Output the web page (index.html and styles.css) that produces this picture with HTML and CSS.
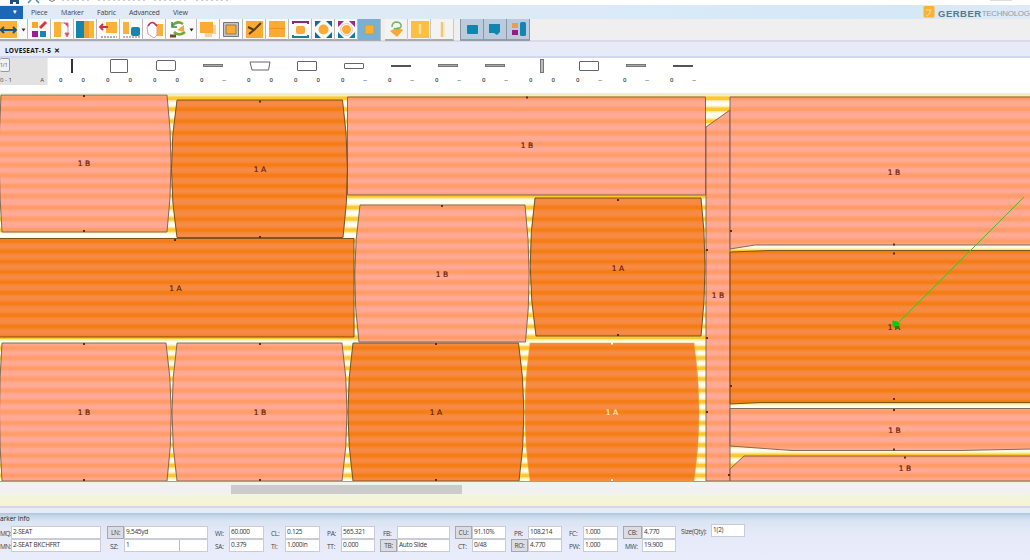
FILE: index.html
```
<!DOCTYPE html>
<html lang="en">
<head>
<meta charset="utf-8">
<title>Marker Making</title>
<link rel="stylesheet" href="styles.css">
</head>
<body>
<div class="app">
  <header class="titlebar">
    <svg width="1030" height="5" viewBox="0 0 1030 5"><path d="M10 0h9v4h-3v-2h-3v2h-3z" fill="#1d4f7d"/><path d="M28 3l3-3M36 0l3 3" stroke="#4d94b8" stroke-width="1.5"/><path d="M49 0q3 3 6 0" stroke="#777" fill="none"/><path d="M62 0h28M98 0h50M154 0h32M196 0h32" stroke="#999" stroke-dasharray="2 3"/><path d="M990 0h22" stroke="#bbb"/></svg>
  </header>
  <nav class="menubar">
    <span class="filebtn">▾</span>
    <span class="menu m1">Piece</span><span class="menu m2">Marker</span><span class="menu m3">Fabric</span><span class="menu m4">Advanced</span><span class="menu m5">View</span>
    <div class="brand">
      <svg width="12" height="12" viewBox="0 0 12 12"><rect x=".5" width="11" height="11.5" rx="1.5" fill="#f9b233"/><path d="M3 10q4-1 5-7M3 4h4" stroke="#ffd07a" stroke-width="1.4" fill="none"/></svg>
      <b>GERBER</b><span>TECHNOLOGY</span>
    </div>
  </nav>
  <div class="toolbar">
    <div class="group">
      <span class="tool first"><svg width="27" height="21" viewBox="0 0 27 21"><path d="M0 2h17v17H0z" fill="#fbb03a"/><path d="M0 11h16M4 8l-3 3 3 3M13 8l3 3-3 3" stroke="#17597d" stroke-width="2" fill="none"/><path d="M21.500 9.500h4l-2 3z" fill="#333"/></svg></span>
      <span class="tool"><svg viewBox="0 0 23 21"><path d="M4 3h6v6H4z" fill="#f9a72b"/><path d="M4 12h6v6H4z" fill="#a01b8c"/><path d="M12 12h6v6h-6z" fill="#1687b5"/><path d="M12 9l6-6" stroke="#df3340" stroke-width="3"/></svg></span>
      <span class="tool"><svg viewBox="0 0 23 21"><path d="M3 3h7v15H3z" fill="#fbb03a"/><path d="M10 4q7-1 7 5v6" stroke="#aaa" fill="none"/><path d="M13 4h4v4M14 14l2 4 2-4z" stroke="#e56d78" fill="#d93a4d"/></svg></span>
      <span class="tool"><svg viewBox="0 0 23 21"><path d="M2 2h8v17H2z" fill="#1585ae"/><path d="M10 2h5v17h-5z" fill="#e9a02d"/><path d="M15 2h5v17h-5z" fill="#ffb52d"/></svg></span>
      <span class="tool"><svg viewBox="0 0 23 21"><path d="M9 3h11v11H9z" fill="#fbb03a"/><path d="M3 8h8M6 5L3 8l3 3" stroke="#cf3041" stroke-width="1.800" fill="none"/><path d="M4 18h16" stroke="#666" stroke-dasharray="2 1"/></svg></span>
      <span class="tool"><svg viewBox="0 0 23 21"><path d="M3 3h6v12H3z" fill="#fbb03a"/><rect x="11" y="8" width="9" height="9" rx="2" fill="#1585ae"/><path d="M3 18h17" stroke="#777" stroke-dasharray="2 1"/></svg></span>
      <span class="tool"><svg viewBox="0 0 23 21"><path d="M12 5h8v12h-8z" fill="#fbb03a"/><path d="M4 8l5-5 5 5v8l-3 3-6-4z" fill="#fff" stroke="#d9a0a0"/><path d="M5 7q4-7 9 0" stroke="#c83256" stroke-width="1.600" fill="none"/></svg></span>
      <span class="tool wide"><svg width="30" height="21" viewBox="0 0 30 21"><path d="M6 7q5-6 11-2M8 13q5 5 11 0" stroke="#6eaa38" stroke-width="2.500" fill="none"/><path d="M11 11l7-5v7z" fill="#f6a63a"/><path d="M4 17h6" stroke="#774a2a" stroke-width="3"/><path d="M6 3v5h5" stroke="#3a8b57" stroke-width="1.500" fill="none"/><path d="M23.500 9.500h4l-2 3z" fill="#222"/></svg></span>
      <span class="tool"><svg viewBox="0 0 23 21"><path d="M7 6h12v9h-4v3H8z" fill="#f9d29b"/><path d="M3 3h13v11H3z" fill="#fbab33"/></svg></span>
      <span class="tool"><svg viewBox="0 0 23 21"><path d="M3.500 3.500h15v14h-15z" fill="#bfc4ce" stroke="#727784"/><path d="M6 6h10v9H6z" fill="#fbab33" stroke="#9c7b45"/></svg></span>
      <span class="tool"><svg viewBox="0 0 23 21"><path d="M3 2h17v17H3z" fill="#fbab33"/><path d="M5 8l6 3 7-7M6 15l5-4" stroke="#5b3d16" stroke-width="2" fill="none"/></svg></span>
      <span class="tool"><svg viewBox="0 0 23 21"><path d="M3 2h16v7H3zM3 10h16v8H3z" fill="#fbab33"/><path d="M3 9.500h16" stroke="#f58c22"/></svg></span>
      <span class="tool"><svg viewBox="0 0 23 21"><rect x="7" y="7" width="9" height="8" rx="2" fill="#fbab33"/><path d="M4 5V3h15v2" stroke="#8c2683" stroke-width="2" fill="none"/><path d="M4 16v2h15v-2" stroke="#168097" stroke-width="2" fill="none"/></svg></span>
      <span class="tool"><svg viewBox="0 0 23 21"><circle cx="11.500" cy="10.500" r="5" fill="#fbab33"/><path d="M3 8V2h6zM14 2h6v6zM3 13v6h6zM20 13v6h-6z" fill="#146b98"/></svg></span>
      <span class="tool"><svg viewBox="0 0 23 21"><circle cx="11.500" cy="10.500" r="4.500" fill="#fbab33"/><path d="M3 8V2h6zM14 2h6v6z" fill="#a02a83"/><path d="M3 13v6h6zM20 13v6h-6z" fill="#147b98"/><circle cx="11.500" cy="10.500" r="6" fill="none" stroke="#ecc7bc"/></svg></span>
      <span class="tool sel"><svg viewBox="0 0 23 21"><path d="M2 2h18v17H2z" fill="#78b1d8"/><path d="M7 6h9v9H7z" fill="#f9b02e" stroke="#a9a270"/></svg></span>
    </div>
    <div class="group second">
      <span class="tool"><svg viewBox="0 0 23 21"><path d="M5 12l8-4 5 3-6 7z" fill="#f9a83a"/><path d="M7 8q0-5 5-5 5 1 4 5-4 3-7 1" stroke="#75b06d" stroke-width="1.500" fill="none"/></svg></span>
      <span class="tool"><svg viewBox="0 0 23 21"><path d="M3 2h18v17H3z" fill="#ffbd42"/><path d="M12 5v10" stroke="#ffe5a1" stroke-width="2.500"/></svg></span>
      <span class="tool"><svg viewBox="0 0 23 21"><path d="M11 3v15" stroke="#efc873" stroke-width="2.500"/><path d="M13 3v15" stroke="#eee1b8"/></svg></span>
    </div>
    <div class="group third">
      <span class="tool"><svg viewBox="0 0 23 21"><rect x="6" y="6" width="11" height="9" rx="1" fill="#0f86ad"/></svg></span>
      <span class="tool"><svg viewBox="0 0 23 21"><path d="M5 5h11v8l-3 3-3-2H5z" fill="#0f86ad"/></svg></span>
      <span class="tool"><svg viewBox="0 0 23 21"><path d="M5 4h6v5H5z" fill="#f39a47"/><path d="M5 11h6v5H5z" fill="#9a1a82"/><rect x="13" y="3" width="6" height="14" rx="1.500" fill="#1286ad"/></svg></span>
    </div>
  </div>
  <div class="tabs"><span>LOVESEAT-1-5</span><b>✕</b></div>
  <div class="tray">
    <div class="corner"><i>1/1</i><p><span>0 - 1</span><span>A</span></p></div>
    <div class="cell"><div><i class="vbar"></i></div><p><span>0</span><span>0</span></p></div>
    <div class="cell"><div><i class="box tall"></i></div><p><span>0</span><span>0</span></p></div>
    <div class="cell"><div><i class="box mid"></i></div><p><span>0</span><span>0</span></p></div>
    <div class="cell"><div><i class="flat"></i></div><p><span>0</span><span>--</span></p></div>
    <div class="cell"><div><svg width="22" height="10" viewBox="0 0 22 10"><path d="M1 1h20l-1.500 8h-16.500z" fill="#fff" stroke="#666"/></svg></div><p><span>0</span><span>0</span></p></div>
    <div class="cell"><div><i class="box"></i></div><p><span>0</span><span>0</span></p></div>
    <div class="cell"><div><i class="box low"></i></div><p><span>0</span><span>--</span></p></div>
    <div class="cell"><div><i class="line"></i></div><p><span>0</span><span>--</span></p></div>
    <div class="cell"><div><i class="flat"></i></div><p><span>0</span><span>--</span></p></div>
    <div class="cell"><div><i class="flat"></i></div><p><span>0</span><span>--</span></p></div>
    <div class="cell"><div><i class="vbox"></i></div><p><span>0</span><span>0</span></p></div>
    <div class="cell"><div><i class="box"></i></div><p><span>0</span><span>--</span></p></div>
    <div class="cell"><div><i class="flat"></i></div><p><span>0</span><span>--</span></p></div>
    <div class="cell"><div><i class="line"></i></div><p><span>0</span><span>--</span></p></div>
  </div>
  <svg class="marker" width="1030" height="390" viewBox="0 93 1030 390">
    <defs>
      <path id="stripes" d="M0 98.3H1030M0 109.3H1030M0 121.300H1030M0 133H1030M0 144H1030M0 155H1030M0 165H1030M0 175.500H1030M0 186H1030M0 196H1030M0 207.500H1030M0 219H1030M0 230H1030M0 241H1030M0 251.500H1030M0 261.700H1030M0 272H1030M0 282.300H1030M0 292.700H1030M0 303.500H1030M0 315.300H1030M0 326.500H1030M0 337.300H1030M0 348H1030M0 358H1030M0 368.300H1030M0 379H1030M0 390.500H1030M0 401.700H1030M0 412H1030M0 423H1030M0 434H1030M0 445H1030M0 455.500H1030M0 465.500H1030M0 475.500H1030"/>
    </defs>
    <rect y="93" width="1030" height="390" fill="#fffef2"/>
    <use href="#stripes" class="stripe-halo"/>
    <use href="#stripes" class="stripe-edge"/>
    <use href="#stripes" class="stripe-core"/>
    <g class="light">
      <path d="M1 95H167Q175 163 167 232H2Q-3 163 1 95Z"/>
      <path d="M347.500 97H705.500V195H347.500Z"/>
      <path d="M360 205H525Q533 274 525.500 342H359Q350 274 360 205Z"/>
      <path d="M706 127L730 110V481H706Z"/>
      <path d="M730 97H1032V245H755L730 249Z"/>
      <path d="M730 408.500H1032V449L960 450.500H792L730 446Z"/>
      <path d="M730 469L744 456H1032V481H730Z"/>
      <path d="M2 343H166Q176 412 167 481H2Q-3 412 2 343Z"/>
      <path d="M177 343H342Q352 412 342 481H177Q167 412 177 343Z"/>
    </g>
    <g class="dark">
      <path d="M177 100H342.500Q352 168 343 237.500H177Q166 168 177 100Z"/>
      <path d="M-2 238.500H354V337H-2Z"/>
      <path d="M535 198H701Q709 266 701 336H536Q525 266 535 198Z"/>
      <path d="M730 252L770 250.500H1032V402.500H760L730 404Z"/>
      <path d="M353 343H518.500Q529 412 519 481H353Q343 412 353 343Z"/>
      <path class="active" d="M530 343H694Q704 412 694 481H530Q520 412 530 343Z"/>
    </g>
    <path d="M0 94H1030" stroke="#c9d9ae" opacity=".7"/>
    <path d="M0 481.500H1030" stroke="#a1a675"/>
    <path d="M0 482.500H1030" stroke="#eef3e6"/>
    <path class="notches" d="M83 96h2M83 231h2M259 101.500h2M259 237h2M526 97.500h2M174 240h2M441 206h2M617 200h2M617 335h2M83 344h2M259 344h2M435 344h2M83 480h2M259 480h2M435 480h2M730 231h2M706 250h2M706 338h2M730 386h2M706 412h2M893 244.500h2M893 253.500h2M893 399h2M893 410h2M893 449.500h2M904 457.500h2M728 475h2"/>
    <path d="M611 343.500h2M611 480h2" stroke="#fff" stroke-width="2"/>
    <g class="labels">
      <text x="84" y="165.500">1 B</text><text x="260" y="171.500">1 A</text><text x="527" y="148">1 B</text><text x="175.500" y="290.500">1 A</text><text x="442" y="276.500">1 B</text><text x="618" y="270.500">1 A</text><text x="718" y="298">1 B</text><text x="894" y="175">1 B</text><text x="894" y="330">1 A</text><text x="894.500" y="433">1 B</text><text x="905" y="471">1 B</text><text x="84" y="415">1 B</text><text x="260" y="415">1 B</text><text x="436" y="415">1 A</text><text class="active-label" x="612" y="415">1 A</text>
    </g>
    <path d="M1024 197L896 325" stroke="#6cae17"/>
    <path d="M892.500 320.500l5 1 2 2v5h-4l-3-3z" fill="#08cf08"/>
    <path d="M895 326h4v3h-4z" fill="#3c7b08"/>
  </svg>
  <div class="scroll"><div class="thumb"></div></div>
  <div class="cream"></div>
  <div class="splitter"></div>
  <section class="info">
    <h2>arker Info</h2>
    <div class="fields">
      <div class="g g1"><label>MQ:</label><span>2-SEAT</span><label>MN:</label><span>2-SEAT BKCHFRT</span></div>
      <div class="g g2"><button>LN:</button><span>9.545yd</span><label>SZ:</label><span class="split">1</span></div>
      <div class="g g3"><label>WI:</label><span>60.000</span><label>SA:</label><span>0.379</span></div>
      <div class="g g4"><label>CL:</label><span>0.125</span><label>TI:</label><span>1.000in</span></div>
      <div class="g g5"><label>PA:</label><span>565.321</span><label>TT:</label><span>0.000</span></div>
      <div class="g g6"><label>FB:</label><span></span><button>TB:</button><span>Auto Slide</span></div>
      <div class="g g7"><button>CU:</button><span>91.10%</span><label>CT:</label><span>0/48</span></div>
      <div class="g g8"><label>PR:</label><span>108.214</span><button>RO:</button><span>4.770</span></div>
      <div class="g g9"><label>FC:</label><span>1.000</span><label>PW:</label><span>1.000</span></div>
      <div class="g g10"><button>CB:</button><span>4.770</span><label>MW:</label><span>19.900</span></div>
      <div class="g g11"><label>Size(Qty):</label><span>1(2)</span></div>
    </div>
  </section>
</div>
</body>
</html>
```
FILE: styles.css
```
* { box-sizing: border-box; }
body { margin: 0; overflow: hidden; font-family: "Open Sans", "Noto Sans", sans-serif; font-size: 7px; color: #444; }
svg { display: block; flex: none; }
.app { width: 1030px; height: 560px; display: flex; flex-direction: column; overflow: hidden; background: #fff; }
.app > * { flex: none; }
.titlebar { height: 5px; background: #fff; }

.menubar { height: 14px; display: flex; align-items: center; background: linear-gradient(90deg, #e4eaf7 0, #dceaf6 50%, #d5e8f6 88%, #dfeaf6 100%); white-space: nowrap; }
.filebtn { width: 23px; height: 13px; background: #1c67b5; color: #fff; text-align: right; padding-right: 6px; line-height: 11px; font-size: 7px; }
.menu { line-height: 14px; padding-top: 2px; letter-spacing: -.15px; }
.m1 { width: 30px; margin-left: 8px; }
.m2 { width: 36px; }
.m3 { width: 32px; }
.m4 { width: 44px; }
.brand { margin-left: auto; width: 107px; display: flex; align-items: center; overflow: hidden; font-family: "Liberation Sans", sans-serif; }
.brand b { font-size: 9.500px; color: #587889; margin: 2px 0 0 3px; width: 48px; letter-spacing: .5px; }
.brand span { font-size: 8px; color: #929ea6; margin-top: 2px; letter-spacing: -.3px; }

.toolbar { height: 23px; display: flex; background: #efefef; border-bottom: 2px solid #dadbe4; }
.group { display: flex; height: 22px; background: #fafafa; border-bottom: 2px solid #aaa; }
.tool { width: 23px; height: 21px; border-right: 1px solid #bbb; overflow: hidden; }
.tool svg { height: 21px; }
.tool.first { width: 28px; }
.tool.wide { width: 31px; }
.tool.sel { background: #78b1d8; }
.second { margin-left: 4px; background: #f3f3f1; }
.second .tool { border-right-color: #c9c9c9; }
.third { margin-left: 6px; background: #b9cbdc; border-left: 1px solid #8b96a2; border-bottom-color: #929caa; }
.third .tool { border-right-color: #8b96a2; }

.tabs { height: 16px; background: #e7ebf8; border-bottom: 2px solid #d2d6f3; display: flex; align-items: center; gap: 3px; padding: 2px 0 0 5px; font-size: 6.500px; color: #111; font-weight: 700; letter-spacing: .2px; }
.tabs b { font-size: 7px; }

.tray { height: 35px; display: flex; background: #fff; font-size: 6px; color: #444; }
.tray p { display: flex; justify-content: space-between; margin: 0; line-height: 8px; }
.corner { width: 48px; height: 27px; background: #e2e2e2; border-right: 1px solid #eee; }
.corner i { display: block; width: 10px; height: 14px; border: 1px solid #999; border-left: 0; border-radius: 2px; background: #f1f1f1; font-size: 5px; line-height: 12px; font-style: normal; }
.corner p { padding: 4px 3px 0 0; }
.cell { width: 47px; }
.cell div { height: 15px; display: flex; align-items: center; justify-content: center; }
.cell p { padding: 3px 10px 0 11px; font-weight: 600; }
.cell i { display: block; }
.box { width: 20px; height: 10px; border: 1px solid #666; border-radius: 1px; }
.tall { width: 18px; height: 14px; }
.mid { height: 11px; border-radius: 2px; }
.low { height: 6px; }
.vbar { width: 2px; height: 14px; background: #333; }
.vbox { width: 4px; height: 14px; border: 1px solid #777; background: #bbb; }
.flat { width: 20px; height: 3px; background: #aaa; border: 1px solid #777; }
.line { width: 20px; height: 2px; background: #555; }

.stripe-halo { stroke: #ffe27a; stroke-width: 8; opacity: .22; }
.stripe-edge { stroke: #ffd54a; stroke-width: 6; opacity: .4; }
.stripe-core { stroke: #fcc31e; stroke-width: 3.600; opacity: .85; }
.light path { fill: rgba(255, 142, 122, .76); stroke: #75604f; stroke-width: .9; }
.dark path { fill: rgba(243, 100, 14, .75); stroke: #6d4a1c; stroke-width: .9; }
.dark .active { stroke: #e5a02c; stroke-width: .5; }
.notches { stroke: #5e2e14; stroke-width: 2; }
.labels { font: 7.500px "DejaVu Sans", sans-serif; fill: #66200a; stroke: #66200a; stroke-width: .2; text-anchor: middle; }
.active-label { fill: #ffe9c4; stroke: #ffe9c4; }

.scroll { height: 11px; padding: 2px 0 0 231px; background: #f1f1f1; }
.thumb { width: 231px; height: 9px; background: #cbcbcb; }
.cream { height: 12px; background: linear-gradient(#f1f5e2, #f6f4cf); }
.splitter { height: 7px; background: linear-gradient(#cfd9ea 2px, #e8ebf7 2px); }
.info { height: 47px; background: linear-gradient(#a8c7dc 0, #c4d8ea 3px, #dae4f3 8px, #e5e9f8 20px, #e9ecfb 47px); }
.info h2 { margin: 0; height: 13px; font-size: 6.500px; line-height: 12px; font-weight: 400; color: #222; }
.fields { display: flex; font-size: 6.500px; letter-spacing: -.25px; }
.g { display: grid; grid-template-rows: 13px 13px; row-gap: 0; white-space: nowrap; }
.g span { background: #fff; border: 1px solid #c9ccd6; line-height: 9px; padding-left: 1px; color: #333; overflow: hidden; }
.g label { line-height: 15px; color: #444; }
.g button { font: inherit; letter-spacing: inherit; color: #444; border: 1px solid #a5a7ad; background: #dcdde2; padding: 0; line-height: 9px; }
.g1 { grid-template-columns: 11px 90px; }
.g1 label { letter-spacing: -.5px; }
.g2 { grid-template-columns: 17px 84px; margin-left: 6px; }
.g2 label { padding-left: 3px; }
.g .split { background: linear-gradient(90deg, #fff 54px, #bbb 54px, #bbb 55px, #fff 55px); }
.g3, .g4 { grid-template-columns: 14px 35px; margin-left: 7px; }
.g5 { grid-template-columns: 14px 34px; margin-left: 7px; }
.g6 { grid-template-columns: 17px 53px; margin-left: 5px; }
.g6 label, .g7 label { padding-left: 3px; }
.g7 { grid-template-columns: 17px 34px; margin-left: 5px; }
.g8 { grid-template-columns: 17px 34px; margin-left: 5px; }
.g8 label { padding-left: 3px; }
.g9 { grid-template-columns: 14px 35px; margin-left: 7px; }
.g10 { grid-template-columns: 19px 34px; margin-left: 5px; }
.g10 label { padding-left: 2px; }
.g11 { grid-template-columns: 30px 34px; margin: -2px 0 0 5px; }
```
